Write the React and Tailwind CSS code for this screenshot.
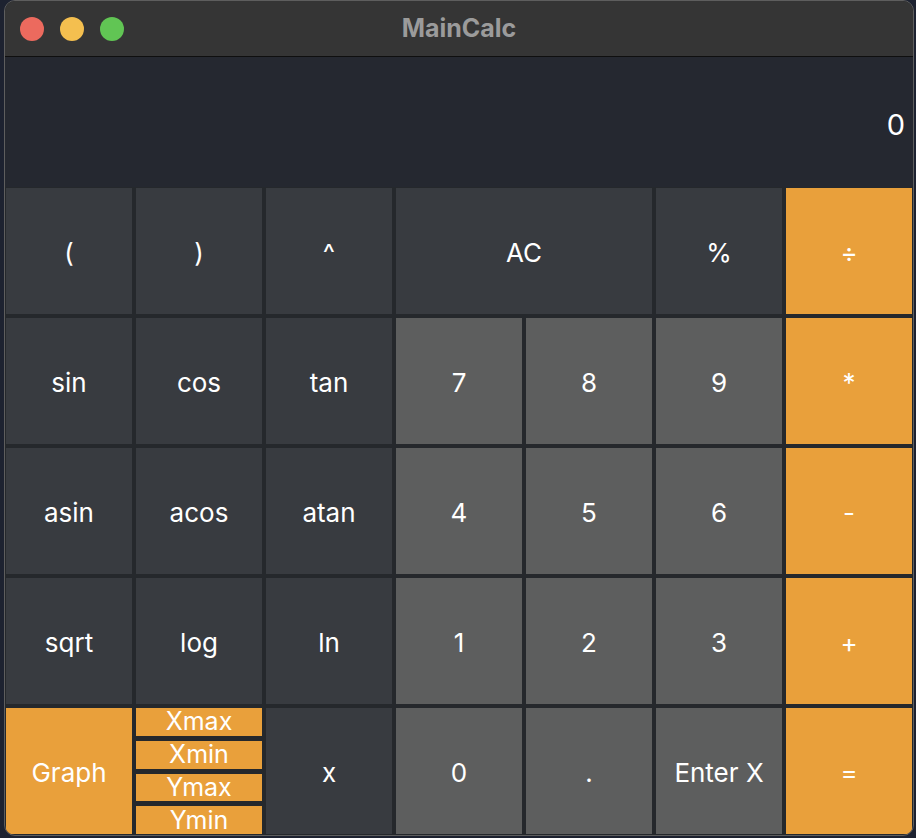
const dark = 'bg-[#383b40]'
const gray = 'bg-[#5d5e5e]'
const orange = 'bg-[#e9a03b]'

function Key({ label, color, span }) {
    return (
        <div className={`${color} ${span ? 'col-span-2' : ''} flex items-center justify-center text-white text-[26px] pt-[2px]`}>
            {label}
        </div>
    )
}

export default function App() {
    const rows = [
        [['(', dark], [')', dark], ['^', dark], ['AC', dark, true], ['%', dark], ['÷', orange]],
        [['sin', dark], ['cos', dark], ['tan', dark], ['7', gray], ['8', gray], ['9', gray], ['*', orange]],
        [['asin', dark], ['acos', dark], ['atan', dark], ['4', gray], ['5', gray], ['6', gray], ['-', orange]],
        [['sqrt', dark], ['log', dark], ['ln', dark], ['1', gray], ['2', gray], ['3', gray], ['+', orange]],
    ]

    return (
        <div className="min-h-[838px] w-[916px] bg-[#1d2230] font-['Inter',sans-serif]">
            <div className="ml-[4px] w-[910px] h-[836px] rounded-[11px] border border-[#5e5e5e] bg-[#25282c] overflow-hidden flex flex-col">
                {/* title bar */}
                <div className="h-[56px] bg-[#353535] border-b border-[#0f0f0f] flex items-center relative shrink-0">
                    <div className="flex gap-[16px] pl-[15px]">
                        <div className="w-[24px] h-[24px] rounded-full bg-[#ec6a5e]" />
                        <div className="w-[24px] h-[24px] rounded-full bg-[#f4bf4f]" />
                        <div className="w-[24px] h-[24px] rounded-full bg-[#61c554]" />
                    </div>
                    <div className="absolute inset-0 flex items-center justify-center text-[25px] font-bold text-[#9b9b9b] pointer-events-none">
                        MainCalc
                    </div>
                </div>

                {/* display */}
                <div className="h-[130px] bg-[#252830] flex items-center justify-end pr-[8px] pt-[6px] text-white text-[29px] shrink-0">
                    0
                </div>

                {/* keys */}
                <div className="mt-[1px] px-[1px] grid grid-cols-[repeat(7,126px)] grid-rows-[repeat(5,126px)] gap-[4px]">
                    {rows.map((row, i) =>
                        row.map(([label, color, span], j) => (
                            <Key key={i + '-' + j} label={label} color={color} span={span} />
                        ))
                    )}
                    <Key label="Graph" color={orange} />
                    <div className="flex flex-col gap-[5px]">
                        {['Xmax', 'Xmin', 'Ymax', 'Ymin'].map(t => (
                            <div key={t} className={`${orange} flex-1 flex items-center justify-center text-white text-[25px] leading-none`}>
                                {t}
                            </div>
                        ))}
                    </div>
                    <Key label="x" color={dark} />
                    <Key label="0" color={gray} />
                    <Key label="." color={gray} />
                    <Key label="Enter X" color={gray} />
                    <Key label="=" color={orange} />
                </div>
            </div>
        </div>
    )
}
